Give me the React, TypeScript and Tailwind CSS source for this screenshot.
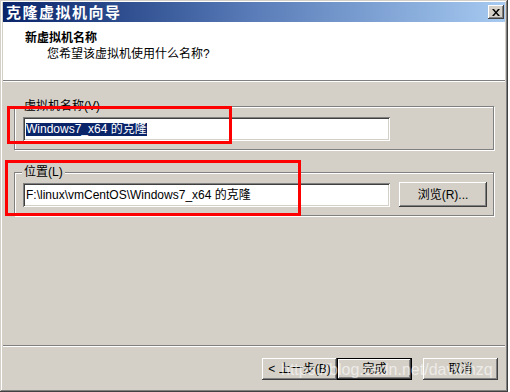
import React from 'react';

const raised =
  'shadow-[inset_-1px_-1px_#404040,inset_1px_1px_#ffffff,inset_-2px_-2px_#808080,inset_2px_2px_#d4d0c8]';
const sunken =
  'shadow-[inset_1px_1px_#808080,inset_-1px_-1px_#ffffff,inset_2px_2px_#404040,inset_-2px_-2px_#d4d0c8]';

const GroupBox = ({ label, children, className }: { label: string; children: React.ReactNode; className?: string }) => (
  <div
    className={`relative ml-[14px] w-[480px] border border-[#808080] shadow-[inset_1px_1px_#ffffff,1px_1px_#ffffff] ${className ?? ''}`}
  >
    <span className="absolute left-[7px] top-[-9px] bg-[#d4d0c8] px-[2px] text-[12px] leading-[16px] text-black">
      {label}
    </span>
    {children}
  </div>
);

const Button = ({ children, primary }: { children: React.ReactNode; primary?: boolean }) => (
  <button
    className={`flex h-[22px] w-[75px] items-center justify-center bg-[#d4d0c8] text-[12px] text-black ${
      primary
        ? 'border border-black shadow-[inset_-1px_-1px_#404040,inset_1px_1px_#ffffff,inset_-2px_-2px_#808080]'
        : raised
    }`}
  >
    {children}
  </button>
);

export default function App() {
  return (
    <div
      className="h-[392px] w-[510px] overflow-hidden bg-white"
      style={{ fontFamily: '"Liberation Sans", "Noto Sans CJK SC", sans-serif' }}
    >
      <div className="relative flex h-[392px] w-[508px] flex-col bg-[#d4d0c8] shadow-[inset_-1px_-1px_#404040,inset_1px_1px_#d4d0c8,inset_-2px_-2px_#808080,inset_2px_2px_#ffffff]">
        {/* Title bar */}
        <div className="mx-[3px] mt-[2px] flex h-[20px] items-center justify-between bg-gradient-to-r from-[#0a246a] via-[#5a7cb8] to-[#a6caf0] pl-[3px] pr-[1px]">
          <span className="text-[15px] font-bold leading-none tracking-[1.5px] text-white">克隆虚拟机向导</span>
          <div className={`flex h-[14px] w-[16px] items-center justify-center bg-[#d4d0c8] ${raised}`}>
            <svg width="8" height="7" viewBox="0 0 8 7">
              <path d="M0 0h2l2 2.5L6 0h2L5 3.5 8 7H6L4 4.5 2 7H0l3-3.5z" fill="#000" />
            </svg>
          </div>
        </div>

        {/* Header */}
        <div className="mx-[3px] flex h-[58px] flex-col bg-white pl-[22px] pt-[9px] text-[12px] text-black">
          <span className="font-bold leading-[15px]">新虚拟机名称</span>
          <span className="pl-[22px] leading-[16px]">您希望该虚拟机使用什么名称?</span>
        </div>
        <div className="mx-[3px] h-[2px] border-t border-b border-t-[#808080] border-b-white" />

        {/* Body */}
        <div className="mt-[24px] flex flex-col">
          <GroupBox label="虚拟机名称(V)" className="h-[44px]">
            <div className={`ml-[8px] mt-[10px] flex h-[24px] w-[367px] items-center bg-white pl-[3px] ${sunken}`}>
              <span className="bg-[#0a246a] text-[12px] leading-[13px] text-white">Windows7_x64 的克隆</span>
            </div>
          </GroupBox>

          <GroupBox label="位置(L)" className="mt-[22px] h-[44px]">
            <div className="ml-[8px] mt-[9px] flex items-center gap-[9px]">
              <div className={`flex h-[24px] w-[367px] items-center bg-white pl-[3px] text-[12px] text-black ${sunken}`}>
                F:\linux\vmCentOS\Windows7_x64 的克隆
              </div>
              <button className={`flex h-[25px] w-[88px] items-center justify-center bg-[#d4d0c8] text-[12px] text-black ${raised}`}>
                浏览(R)...
              </button>
            </div>
          </GroupBox>
        </div>

        <div className="mx-[3px] mt-[129px] h-[2px] border-t border-b border-t-[#808080] border-b-white" />

        {/* Buttons */}
        <div className="mt-[11px] flex pl-[262px]">
          <Button>&lt; 上一步(B)</Button>
          <Button primary>完成</Button>
          <div className="ml-[11px]">
            <Button>取消</Button>
          </div>
        </div>

        {/* Annotations */}
        <div className="absolute left-[7px] top-[106px] h-[38px] w-[225px] border-[3px] border-[#ff0000]" />
        <div className="absolute left-[5px] top-[160px] h-[56px] w-[296px] border-[3px] border-[#ff0000]" />

        {/* Watermark */}
        <span className="absolute left-[281px] top-[359px] text-[16px] leading-[22px] text-white/60">
          https://blog.csdn.net/davidhzq
        </span>
      </div>
    </div>
  );
}
